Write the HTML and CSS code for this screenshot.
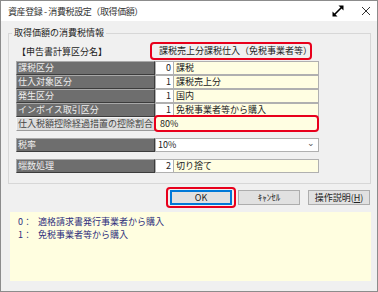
FILE: index.html
```html
<!DOCTYPE html>
<html lang="ja">
<head>
    <meta charset="UTF-8">
    <title>資産登録 - 消費税設定（取得価額）</title>
    <link rel="stylesheet" href="styles.css">
</head>
<body>
    <div class="window">
        <div class="titlebar">
            <span class="title">資産登録 - 消費税設定（取得価額）</span>
            <span class="tb-icons">
                <svg class="expand" width="12" height="12" viewBox="0 0 12 12">
                    <line x1="2.5" y1="9.5" x2="9.5" y2="2.5" stroke="#000" stroke-width="1.6"/>
                    <polygon points="0.5,11.5 0.5,6.5 5.5,11.5" fill="#000"/>
                    <polygon points="11.5,0.5 6.5,0.5 11.5,5.5" fill="#000"/>
                </svg>
                <svg class="close" width="10" height="10" viewBox="0 0 10 10">
                    <path d="M1 1 L9 9 M9 1 L1 9" stroke="#333" stroke-width="1"/>
                </svg>
            </span>
        </div>
        <div class="content">
            <fieldset class="group">
                <legend>取得価額の消費税情報</legend>
                <div class="name-row">
                    <span class="name-label">【申告書計算区分名】</span>
                    <span class="name-value">課税売上分課税仕入（免税事業者等）</span>
                </div>
                <div class="grid">
                    <div class="label">課税区分</div>
                    <div class="num">0</div>
                    <div class="text">課税</div>

                    <div class="label">仕入対象区分</div>
                    <div class="num">1</div>
                    <div class="text">課税売上分</div>

                    <div class="label">発生区分</div>
                    <div class="num">1</div>
                    <div class="text">国内</div>

                    <div class="label">インボイス取引区分</div>
                    <div class="num">1</div>
                    <div class="text">免税事業者等から購入</div>

                    <div class="label light">仕入税額控除経過措置の控除割合</div>
                    <div class="rate">80%</div>
                </div>
                <div class="grid single">
                    <div class="label">税率</div>
                    <div class="select">10%<span class="chev">&#8964;</span></div>
                </div>
                <div class="grid">
                    <div class="label">端数処理</div>
                    <div class="num white">2</div>
                    <div class="text">切り捨て</div>
                </div>
            </fieldset>
            <div class="buttons">
                <span class="mark"><button class="btn default">OK</button></span>
                <button class="btn cancel">ｷｬﾝｾﾙ</button>
                <button class="btn">操作説明(<u>H</u>)</button>
            </div>
            <div class="help">
                <div><span class="code">0：</span>適格請求書発行事業者から購入</div>
                <div><span class="code">1：</span>免税事業者等から購入</div>
            </div>
        </div>
    </div>
</body>
</html>
```

FILE: styles.css
```css
body {
    margin: 0;
    font-family: "Noto Sans CJK JP", sans-serif;
    font-size: 9px;
    background: #ffffff;
}
.window {
    width: 376px;
    height: 290px;
    border: 1px solid #8c8c8c;
    background: #f0f0f0;
}
.titlebar {
    height: 20px;
    background: #ffffff;
    display: flex;
    align-items: center;
    justify-content: space-between;
    padding: 0 6px 0 7px;
}
.title {
    color: #333;
    letter-spacing: -0.4px;
}
.tb-icons {
    display: flex;
    align-items: center;
    gap: 17px;
}
.tb-icons svg {
    display: block;
}
.content {
    padding: 0 6px 0 7px;
}
.group {
    margin: 6px 0 0;
    padding: 3px 7px 10px;
    border: 1px solid #d7d7d7;
    min-width: 0;
}
.group legend {
    margin-left: -4px;
    padding: 0 2px;
    line-height: 12px;
    color: #222;
}
.name-row {
    display: flex;
    align-items: center;
    height: 18px;
}
.name-label {
    width: 133px;
    padding-left: 1px;
    color: #222;
}
.name-value {
    box-sizing: border-box;
    width: 162px;
    height: 18px;
    line-height: 14px;
    border: 2px solid #e8001c;
    border-radius: 4px;
    padding-left: 7px;
    color: #222;
}
.grid {
    display: grid;
    grid-template-columns: 139px 18px 146px;
    grid-auto-rows: 14px;
    margin-top: 1px;
}
.grid.single {
    grid-template-columns: 139px 164px;
    margin-top: 7px;
}
.grid + .grid {
    margin-top: 7px;
}
.label {
    box-sizing: border-box;
    background: #6e6e6e;
    color: #eeeeee;
    border: 1px solid;
    border-color: #a8a8a8 #3c3c3c #3c3c3c #a8a8a8;
    padding-left: 1px;
    line-height: 12px;
    white-space: nowrap;
}
.label.light {
    background: #dcdcdc;
    color: #444;
    border-color: #f4f4f4 #9a9a9a #9a9a9a #f4f4f4;
}
.num {
    box-sizing: border-box;
    background: #ffffff;
    border: 1px solid #b0b0b0;
    border-right: none;
    text-align: right;
    padding-right: 2px;
    line-height: 12px;
    color: #222;
}
.text {
    box-sizing: border-box;
    background: #fffee2;
    border: 1px solid #b0b0b0;
    padding-left: 2px;
    line-height: 12px;
    color: #222;
}
.rate {
    grid-column: 2 / 4;
    box-sizing: border-box;
    height: 17px;
    margin: -2px 0 -1px -1px;
    background: #fffee2;
    border: 2px solid #e8001c;
    border-radius: 4px;
    padding-left: 4px;
    line-height: 13px;
    color: #222;
}
.select {
    box-sizing: border-box;
    background: #ffffff;
    border: 1px solid #b0b0b0;
    padding-left: 2px;
    line-height: 12px;
    color: #222;
    display: flex;
    justify-content: space-between;
}
.chev {
    padding-right: 3px;
    color: #555;
    line-height: 8px;
}
.buttons {
    display: flex;
    justify-content: flex-end;
    align-items: center;
    margin-top: 3px;
    padding-right: 1px;
}
.mark {
    border: 2px solid #e8001c;
    border-radius: 4px;
    padding: 1px 2px;
    margin-right: 2px;
}
.btn {
    display: block;
    width: 62px;
    height: 15px;
    padding: 0;
    font-family: "Noto Sans CJK JP", sans-serif;
    font-size: 9px;
    line-height: 13px;
    background: #e1e1e1;
    border: 1px solid #adadad;
    color: #222;
}
.btn.default {
    border: 1px solid #0078d7;
    box-shadow: inset 0 0 0 1px #0078d7;
}
.btn.cancel {
    margin-right: 8px;
}
.help {
    margin: 4px 0 0 2px;
    height: 69px;
    box-sizing: border-box;
    background: #fffee0;
    padding: 3px 8px;
    line-height: 13px;
    color: #2e2e7c;
}
.code {
    display: inline-block;
    width: 20px;
}
```
